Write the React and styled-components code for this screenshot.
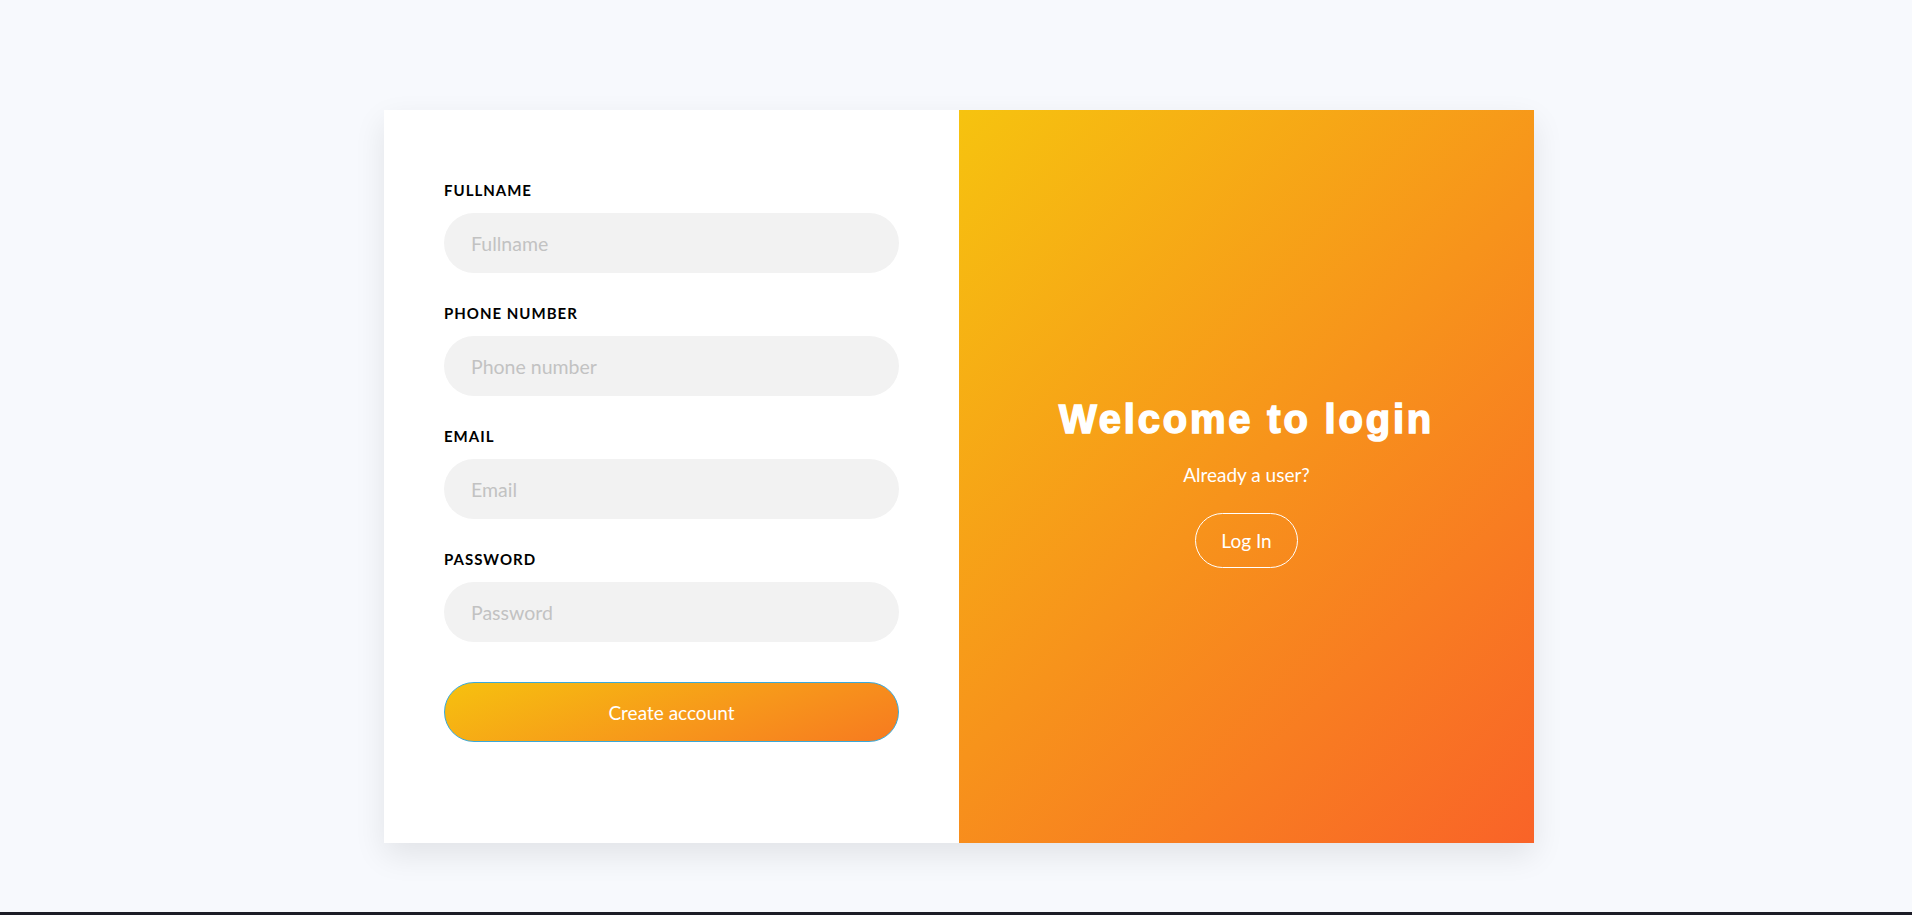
import React from 'react';
import styled, { createGlobalStyle } from 'styled-components';

const GlobalStyle = createGlobalStyle`
  * { box-sizing: border-box; }
  body {
    margin: 0;
    background: #f7f9fd;
    font-family: Lato, "Open Sans", sans-serif;
    overflow: hidden;
  }
`;

const Page = styled.div`
  height: 912px;
  display: flex;
  justify-content: center;
  padding: 110px 0 0 6px;
`;

const BottomBar = styled.div`
  height: 3px;
  background: #1c1c26;
`;

const Card = styled.div`
  width: 1150px;
  height: 733px;
  display: flex;
  background: #fff;
  box-shadow: 0 12px 30px rgba(0, 0, 0, 0.09);
`;

const FormSide = styled.form`
  width: 50%;
  flex: none;
  padding: 70px 60px 0 60px;
  display: flex;
  flex-direction: column;
`;

const Field = styled.div`
  display: flex;
  flex-direction: column;
  margin-bottom: 30px;
`;

const Label = styled.label`
  font-size: 15px;
  line-height: 20px;
  font-weight: 700;
  letter-spacing: 1px;
  color: #000;
  margin-bottom: 13px;
`;

const Input = styled.input`
  width: 100%;
  height: 60px;
  border: none;
  border-radius: 30px;
  background: #f2f2f2;
  padding: 0 27px;
  font-family: Lato, sans-serif;
  font-size: 19.5px;
  color: #333;
  outline: none;

  &::placeholder {
    color: #c2c2c2;
  }
`;

const SubmitButton = styled.button`
  margin-top: 10px;
  height: 60px;
  border-radius: 30px;
  border: 1px solid #3aa9d9;
  background: linear-gradient(160deg, #f6c10f, #f7961b 60%, #f77a20);
  color: #fff;
  font-family: Lato, sans-serif;
  font-size: 19px;
  cursor: pointer;
`;

const WelcomeSide = styled.div`
  width: 50%;
  flex: none;
  background: linear-gradient(135deg, #f6c30f, #f7931b 50%, #f96328);
  display: flex;
  flex-direction: column;
  align-items: center;
  justify-content: center;
  color: #fff;
  padding-top: 10px;
`;

const Title = styled.h1`
  margin: 0;
  font-family: "Liberation Sans", Arial, sans-serif;
  font-weight: 700;
  font-size: 40px;
  line-height: 48px;
  letter-spacing: 2.8px;
  -webkit-text-stroke: 1.5px #fff;
`;

const Subtitle = styled.p`
  margin: 20px 0 0;
  font-size: 19px;
  line-height: 23px;
`;

const OutlineButton = styled.button`
  margin-top: 27px;
  padding: 16px 25px;
  border: 1px solid #fff;
  border-radius: 30px;
  background: transparent;
  color: #fff;
  font-family: Lato, sans-serif;
  font-size: 19px;
  line-height: 21px;
  cursor: pointer;
`;

const fields = [
  { id: 'fullname', label: 'FULLNAME', placeholder: 'Fullname', type: 'text' },
  { id: 'phone', label: 'PHONE NUMBER', placeholder: 'Phone number', type: 'tel' },
  { id: 'email', label: 'EMAIL', placeholder: 'Email', type: 'email' },
  { id: 'password', label: 'PASSWORD', placeholder: 'Password', type: 'password' },
];

export default function App() {
  return (
    <>
      <GlobalStyle />
      <Page>
        <Card>
          <FormSide onSubmit={(e) => e.preventDefault()}>
            {fields.map((f) => (
              <Field key={f.id}>
                <Label htmlFor={f.id}>{f.label}</Label>
                <Input id={f.id} type={f.type} placeholder={f.placeholder} />
              </Field>
            ))}
            <SubmitButton type="submit">Create account</SubmitButton>
          </FormSide>
          <WelcomeSide>
            <Title>Welcome to login</Title>
            <Subtitle>Already a user?</Subtitle>
            <OutlineButton type="button">Log In</OutlineButton>
          </WelcomeSide>
        </Card>
      </Page>
      <BottomBar />
    </>
  );
}
